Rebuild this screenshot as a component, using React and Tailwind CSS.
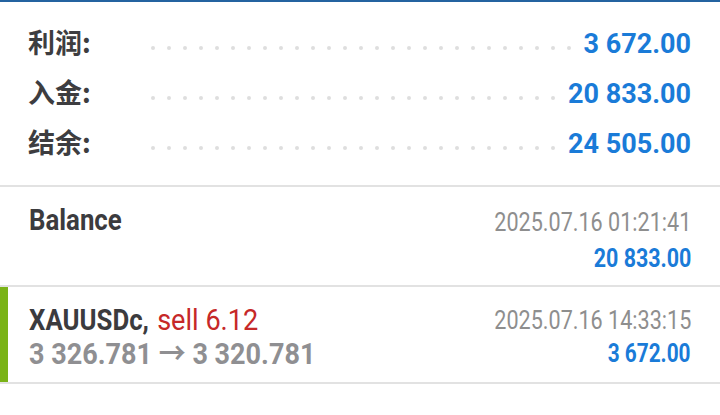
import React from "react";

const dots = Array.from({ length: 40 });

function SummaryRow({ label, value }) {
  return (
    <div className="flex items-center h-[50px]">
      <div className="w-[123px] shrink-0 text-[27px] font-bold leading-[30px] text-[#3d3d40] mb-[4px]" style={{ fontFamily: '"Noto Sans CJK SC", sans-serif' }}>
        {label}
      </div>
      <div className="flex-1 min-w-0 mr-[12px] mt-[8px] flex flex-wrap h-[4px] overflow-hidden gap-x-[12px] gap-y-[10px]">
        {dots.map((_, i) => (
          <span key={i} className="w-[4px] h-[4px] rounded-full bg-[#dedede] shrink-0" />
        ))}
      </div>
      <div className="shrink-0 text-[27px] font-bold leading-[30px] text-[#1a7bd8]">{value}</div>
    </div>
  );
}

export default function App() {
  return (
    <div className="w-[720px] h-[415px] bg-white overflow-hidden" style={{ fontFamily: 'Roboto, "Noto Sans CJK SC", sans-serif' }}>
      <div className="h-[2px] bg-[#2463a0]" />
      <div className="pl-[28px] pr-[29px] pt-[17px] pb-[16px]">
        <SummaryRow label="利润:" value="3 672.00" />
        <SummaryRow label="入金:" value="20 833.00" />
        <SummaryRow label="结余:" value="24 505.00" />
      </div>
      <div className="h-[2px] bg-[#e2e2e2]" />
      <div className="h-[98px] flex justify-between pl-[29px] pr-[29px]">
        <div className="pt-[15px]">
          <span className="inline-block text-[30px] font-bold leading-[36px] text-[#3b3b3e] scale-x-[0.86] origin-left">Balance</span>
        </div>
        <div className="pt-[20px] flex flex-col items-end">
          <span className="inline-block text-[26px] leading-[30px] text-[#8e8e8e] scale-x-[0.83] origin-right">2025.07.16 01:21:41</span>
          <span className="inline-block mt-[6px] text-[26px] font-bold leading-[30px] text-[#1a7bd8] scale-x-[0.825] origin-right">20 833.00</span>
        </div>
      </div>
      <div className="h-[2px] bg-[#e2e2e2]" />
      <div className="h-[95px] flex">
        <div className="w-[8px] bg-[#7ab317] shrink-0" />
        <div className="flex-1 flex justify-between pl-[21px] pr-[29px]">
          <div className="pt-[16px] flex flex-col">
            <span className="inline-block text-[30px] font-bold leading-[34px] scale-x-[0.86] origin-left whitespace-nowrap">
              <span className="text-[#3b3b3e]">XAUUSDc,</span>
              <span className="inline-block font-normal text-[#c62828] ml-[10px] scale-x-[1.05] origin-left">sell 6.12</span>
            </span>
            <span className="inline-block text-[30px] font-bold leading-[34px] text-[#8f8f92] scale-x-[0.9] origin-left whitespace-nowrap">
              3 326.781 → 3 320.781
            </span>
          </div>
          <div className="pt-[18px] flex flex-col items-end">
            <span className="inline-block text-[26px] leading-[30px] text-[#8e8e8e] scale-x-[0.83] origin-right">2025.07.16 14:33:15</span>
            <span className="inline-block mt-[3px] text-[26px] font-bold leading-[30px] text-[#1a7bd8] scale-x-[0.8] origin-right">3 672.00</span>
          </div>
        </div>
      </div>
      <div className="h-[2px] bg-[#e2e2e2]" />
    </div>
  );
}
